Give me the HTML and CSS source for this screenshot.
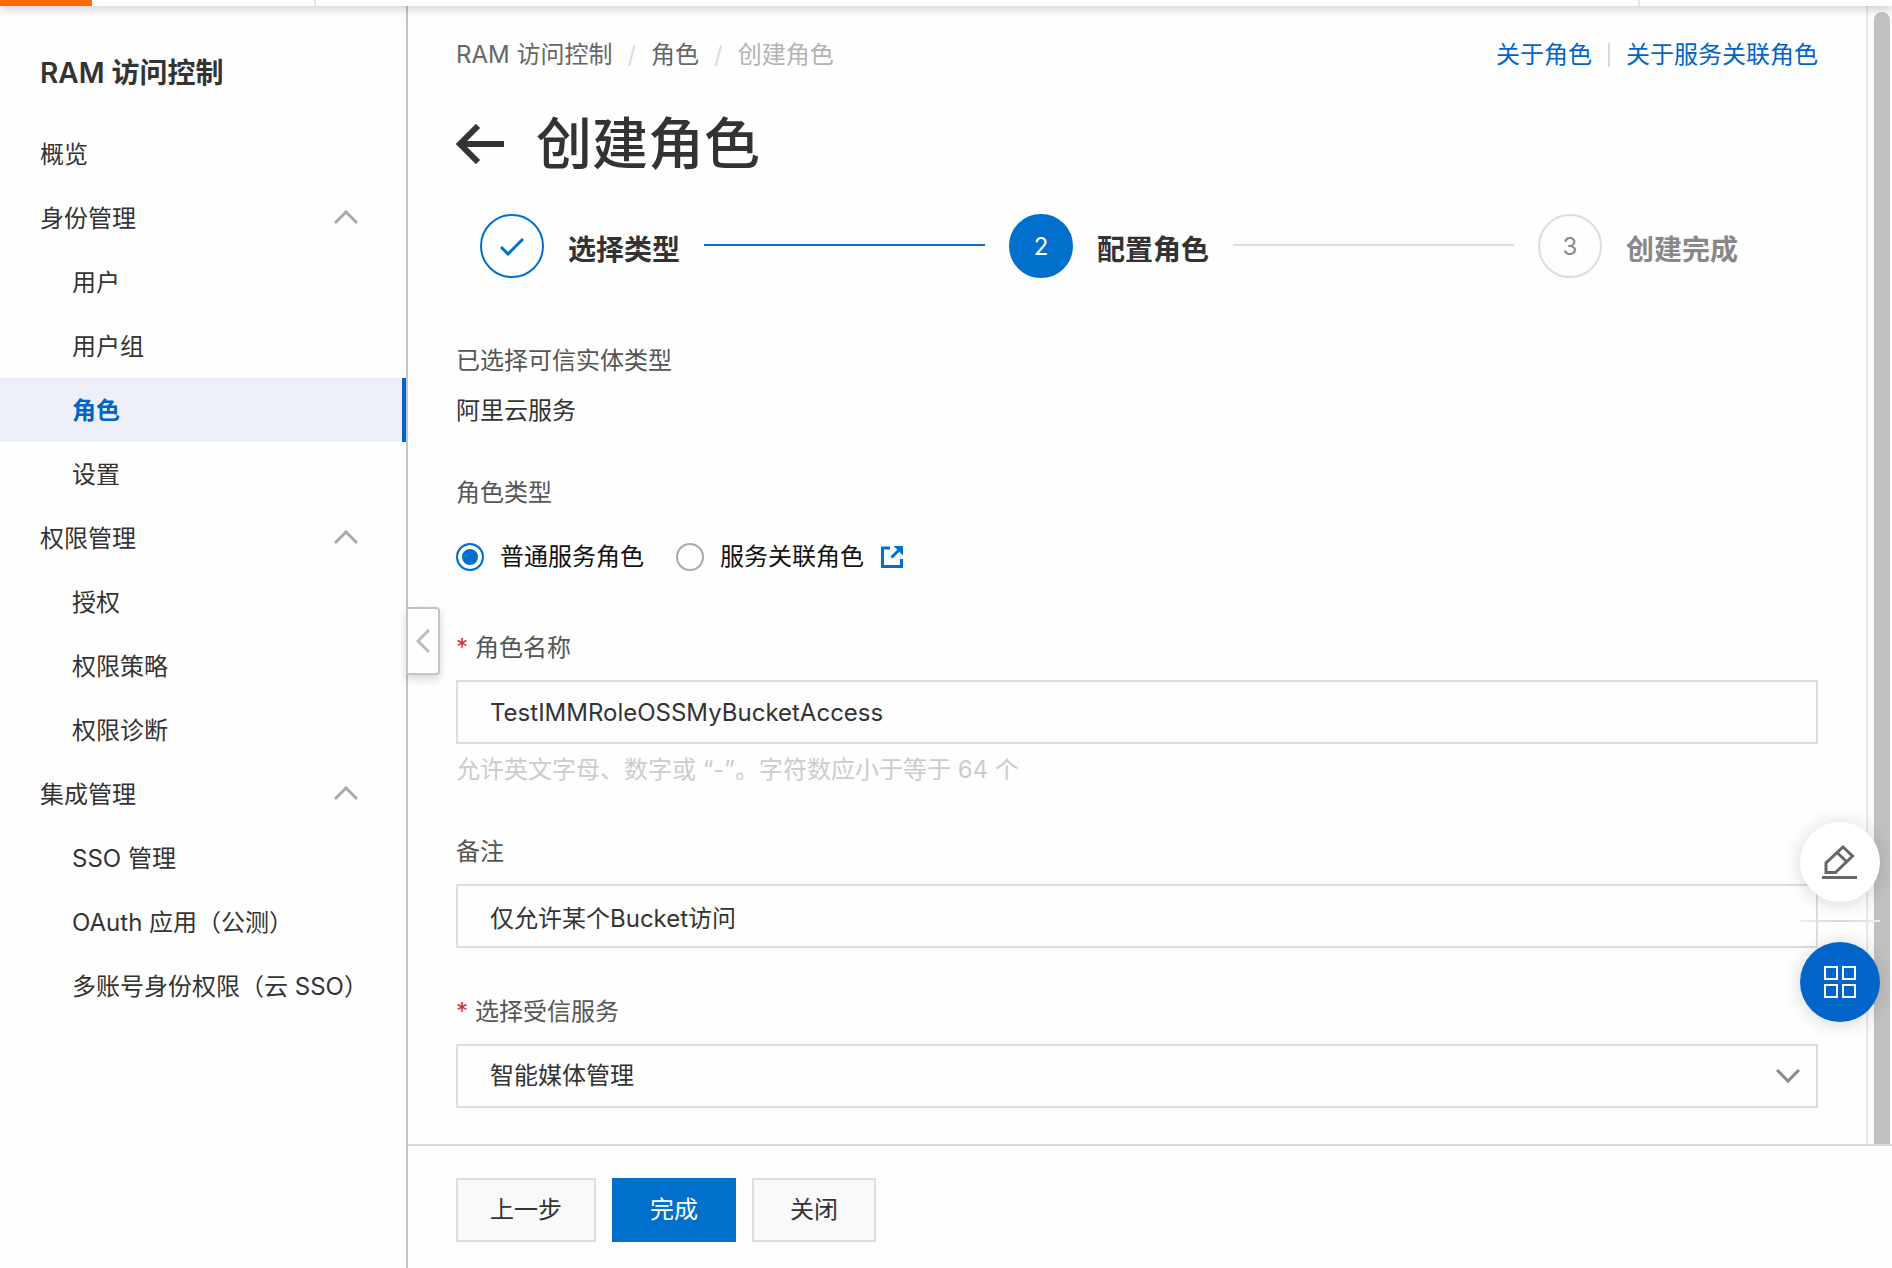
FILE: index.html
```html
<!DOCTYPE html>
<html lang="zh-CN">
<head>
<meta charset="utf-8">
<meta name="viewport" content="width=device-width, initial-scale=1">
<title>创建角色 - RAM 访问控制</title>
<link rel="stylesheet" href="styles.css">
</head>
<body>
<div class="app">
  <header class="topbar">
    <div class="topbar-menu"></div>
    <div class="topbar-logo"></div>
    <div class="topbar-search"></div>
  </header>
  <div class="shell">
    <aside class="sidebar">
      <h2 class="sidebar-title">RAM 访问控制</h2>
      <nav class="nav">
        <a class="nav-item" href="#">概览</a>
        <button class="nav-item nav-group" type="button">身份管理
          <svg class="chevron" viewBox="0 0 24 14" aria-hidden="true"><path d="M1 13 12 2l11 11"/></svg>
        </button>
        <a class="nav-item nav-sub" href="#">用户</a>
        <a class="nav-item nav-sub" href="#">用户组</a>
        <a class="nav-item nav-sub is-active" href="#">角色</a>
        <a class="nav-item nav-sub" href="#">设置</a>
        <button class="nav-item nav-group" type="button">权限管理
          <svg class="chevron" viewBox="0 0 24 14" aria-hidden="true"><path d="M1 13 12 2l11 11"/></svg>
        </button>
        <a class="nav-item nav-sub" href="#">授权</a>
        <a class="nav-item nav-sub" href="#">权限策略</a>
        <a class="nav-item nav-sub" href="#">权限诊断</a>
        <button class="nav-item nav-group" type="button">集成管理
          <svg class="chevron" viewBox="0 0 24 14" aria-hidden="true"><path d="M1 13 12 2l11 11"/></svg>
        </button>
        <a class="nav-item nav-sub" href="#">SSO 管理</a>
        <a class="nav-item nav-sub" href="#">OAuth 应用（公测）</a>
        <a class="nav-item nav-sub" href="#">多账号身份权限（云 SSO）</a>
      </nav>
      <button class="collapse" type="button" aria-label="收起">
        <svg class="collapse-icon" viewBox="0 0 14 24" aria-hidden="true"><path d="M13 1 2 12l11 11"/></svg>
      </button>
    </aside>

    <div class="main">
      <div class="scroll">
        <main class="content">
          <div class="crumb-row">
            <nav class="crumbs">
              <a href="#">RAM 访问控制</a>
              <span class="slash">/</span>
              <a href="#">角色</a>
              <span class="slash">/</span>
              <span class="crumb-current">创建角色</span>
            </nav>
            <div class="help-links">
              <a href="#">关于角色</a>
              <span class="divider"></span>
              <a href="#">关于服务关联角色</a>
            </div>
          </div>

          <div class="title-row">
            <button class="back" type="button" aria-label="返回">
              <svg class="back-icon" viewBox="0 0 48 40" aria-hidden="true"><path d="M48 20H5M22 2 4 20l18 18"/></svg>
            </button>
            <h1 class="title">创建角色</h1>
          </div>

          <ol class="steps">
            <li class="step is-done">
              <span class="step-mark"><svg class="check" viewBox="0 0 24 18" aria-hidden="true"><path d="M1 9l7 7L23 1"/></svg></span>
              <span class="step-label">选择类型</span>
              <span class="step-line"></span>
            </li>
            <li class="step is-current">
              <span class="step-mark">2</span>
              <span class="step-label">配置角色</span>
              <span class="step-line"></span>
            </li>
            <li class="step">
              <span class="step-mark">3</span>
              <span class="step-label">创建完成</span>
            </li>
          </ol>

          <form class="form">
            <div class="field">
              <span class="label">已选择可信实体类型</span>
              <span class="value">阿里云服务</span>
            </div>
            <div class="field" role="radiogroup" aria-labelledby="type-label">
              <span class="label" id="type-label">角色类型</span>
              <div class="choices">
                <label class="choice"><input class="radio" type="radio" name="type" checked>普通服务角色</label>
                <label class="choice"><input class="radio" type="radio" name="type">服务关联角色</label>
                <a class="external" href="#" aria-label="服务关联角色说明">
                  <svg class="external-icon" viewBox="0 0 22 22" aria-hidden="true"><path class="frame" d="M9 2H1.500v18.500h19V13"/><path class="shaft" d="m10.500 11.500 7-7"/><path class="head" d="M12.500 0H22v9.500z"/></svg>
                </a>
              </div>
            </div>
            <div class="field">
              <label class="label required" for="role-name">角色名称</label>
              <input class="control" id="role-name" type="text" value="TestIMMRoleOSSMyBucketAccess">
              <span class="hint">允许英文字母、数字或 “-”。字符数应小于等于 64 个</span>
            </div>
            <div class="field">
              <label class="label" for="remark">备注</label>
              <input class="control" id="remark" type="text" value="仅允许某个Bucket访问">
            </div>
            <div class="field">
              <label class="label required" for="service">选择受信服务</label>
              <div class="select-wrap">
                <select class="control" id="service"><option>智能媒体管理</option></select>
                <svg class="select-icon" viewBox="0 0 24 14" aria-hidden="true"><path d="M1 1l11 11L23 1"/></svg>
              </div>
            </div>
          </form>
        </main>
        <div class="track"><div class="thumb"></div></div>
      </div>
      <footer class="footer">
        <button class="btn" type="button">上一步</button>
        <button class="btn btn-primary" type="button">完成</button>
        <button class="btn" type="button">关闭</button>
      </footer>
    </div>
  </div>

  <div class="floaters">
    <button class="floater" type="button" aria-label="反馈">
      <svg class="pencil" viewBox="0 0 36 36" aria-hidden="true"><path d="M4 28.500V19L21 3l9.500 9-17 16.500zM15 8.500l9 8.500"/><path d="M0 33.500h35"/></svg>
    </button>
    <span class="floater-line"></span>
    <button class="floater floater-blue" type="button" aria-label="应用">
      <svg class="grid-icon" viewBox="0 0 32 32" aria-hidden="true"><path d="M1 1h12v12H1zM19 1h12v12H19zM1 19h12v12H1zM19 19h12v12H19z"/></svg>
    </button>
  </div>
</div>
</body>
</html>
```
FILE: styles.css
```css
* {
  box-sizing: border-box;
}

body {
  margin: 0;
  color: #333;
  background: #fefefe;
  font: 24px/36px Inter, "Noto Sans CJK SC", sans-serif;
}

button,
input,
select {
  font: inherit;
  color: inherit;
}

a {
  color: inherit;
  text-decoration: none;
}

svg {
  display: block;
  fill: none;
}

.app {
  position: relative;
  display: flex;
  flex-direction: column;
  height: 100vh;
  overflow: hidden;
}

/* Top bar */
.topbar {
  position: relative;
  z-index: 2;
  display: flex;
  flex: none;
  height: 6px;
  background: #fefefe;
  box-shadow: 0 2px 10px rgba(0, 0, 0, 0.26);
}

.topbar-menu {
  width: 92px;
  background: #ff6a00;
}

.topbar-logo {
  width: 224px;
  border-right: 2px solid #e6e6e6;
}

.topbar-search {
  flex: 1;
  margin-right: 252px;
  border-right: 2px solid #e6e6e6;
}

.shell {
  display: flex;
  flex: 1;
  min-height: 0;
}

/* Sidebar */
.sidebar {
  position: relative;
  flex: none;
  width: 408px;
  border-right: 2px solid #c0c4cc;
}

.sidebar-title {
  margin: 0;
  padding: 49px 40px 31px;
  font-size: 28px;
  font-weight: 600;
}

.nav {
  display: flex;
  flex-direction: column;
}

.nav-item {
  display: flex;
  align-items: center;
  justify-content: space-between;
  height: 64px;
  padding: 2px 48px 0 40px;
  border: 0;
  background: none;
  white-space: nowrap;
}

.nav-sub {
  padding: 2px 0 0 72px;
}

.is-active {
  color: #0064c8;
  background: #edf1f7;
  border-right: 4px solid #0064c8;
  font-weight: 600;
}

.chevron,
.select-icon {
  width: 24px;
  height: 14px;
  stroke: #aaa;
  stroke-width: 3;
}

.chevron {
  margin-bottom: 4px;
}

.collapse {
  position: absolute;
  top: 601px;
  left: 406px;
  z-index: 1;
  width: 34px;
  height: 68px;
  padding: 0 0 0 8px;
  border: 2px solid #c0c4cc;
  border-radius: 0 4px 4px 0;
  background: #fefefe;
  box-shadow: 0 4px 8px rgba(0, 0, 0, 0.16);
}

.collapse-icon {
  width: 14px;
  height: 24px;
  stroke: #bbb;
  stroke-width: 3;
}

/* Main column */
.main {
  display: flex;
  flex: 1;
  flex-direction: column;
  min-width: 0;
}

.scroll {
  display: flex;
  flex: 1;
  min-height: 0;
}

.content {
  flex: 1;
  min-width: 0;
  padding: 31px 48px 0;
}

.track {
  flex: none;
  width: 26px;
  padding: 6px 2px 0 6px;
  border-left: 2px solid #e8e8e8;
  background: #fafafa;
}

.thumb {
  height: 100%;
  border-radius: 8px 8px 0 0;
  background: #c1c1c1;
}

.crumb-row,
.crumbs,
.help-links {
  display: flex;
  align-items: center;
}

.crumb-row {
  justify-content: space-between;
}

.crumbs {
  gap: 15px;
  color: #666;
}

.slash {
  color: #ddd;
}

.crumb-current {
  color: #b3b3b3;
}

.help-links {
  gap: 16px;
  color: #0064c8;
}

.divider {
  width: 2px;
  height: 24px;
  background: #d9d9d9;
}

.title-row {
  display: flex;
  align-items: center;
  gap: 32px;
  margin-top: 33px;
}

.back {
  padding: 0;
  border: 0;
  background: none;
}

.back-icon {
  width: 48px;
  height: 40px;
  stroke: #333;
  stroke-width: 6;
}

.title {
  margin: 0;
  font-size: 56px;
  font-weight: 500;
  line-height: 76px;
}

/* Steps */
.steps {
  display: flex;
  margin: 32px 0 0;
  padding: 0 80px 0 24px;
  list-style: none;
}

.step {
  display: flex;
  align-items: center;
  gap: 24px;
  color: #888;
}

.step:not(:last-child) {
  flex: 1;
  padding-right: 24px;
  color: #333;
}

.step-mark {
  display: flex;
  align-items: center;
  justify-content: center;
  width: 64px;
  height: 64px;
  padding-top: 2px;
  border: 2px solid #ddd;
  border-radius: 50%;
}

.is-done .step-mark {
  border-color: #0070cc;
}

.step.is-current .step-mark {
  border-color: #0070cc;
  background: #0070cc;
  color: #fff;
}

.check {
  width: 24px;
  height: 18px;
  stroke: #0070cc;
  stroke-width: 3;
}

.step-label {
  padding-top: 8px;
  font-size: 28px;
  font-weight: 600;
}

.step-line {
  flex: 1;
  height: 2px;
  margin-bottom: 2px;
  background: #ddd;
}

.is-done .step-line {
  background: #0070cc;
}

/* Form */
.form {
  display: flex;
  flex-direction: column;
  gap: 46px;
  margin-top: 65px;
}

.field {
  display: flex;
  flex-direction: column;
}

.label {
  margin-bottom: 14px;
  color: #555;
}

.required::before {
  content: "*";
  margin-right: 7px;
  color: #d93026;
}

.choices {
  display: flex;
  align-items: center;
  padding: 14px 0 9px;
  color: #111;
}

.choice {
  display: flex;
  align-items: center;
  gap: 16px;
  margin-right: 32px;
}

.choice:nth-child(2) {
  margin-right: 17px;
}

.radio {
  appearance: none;
  width: 28px;
  height: 28px;
  margin: 0;
  border: 2px solid #aaa;
  border-radius: 50%;
}

.radio:checked {
  border-color: #0070cc;
  background: #0070cc;
  box-shadow: inset 0 0 0 4px #fefefe;
}

.external-icon {
  width: 22px;
  height: 22px;
}

.frame,
.shaft {
  stroke: #0070cc;
  stroke-width: 3;
}

.head {
  fill: #0070cc;
}

.control {
  width: 100%;
  height: 64px;
  padding: 0 32px;
  border: 2px solid #ddd;
  border-radius: 0;
  background: transparent;
  appearance: none;
}

.hint {
  margin-top: 8px;
  color: #ccc;
}

.select-wrap {
  position: relative;
}

.select-icon {
  position: absolute;
  top: 25px;
  right: 18px;
  stroke: #888;
  pointer-events: none;
}

/* Footer */
.footer {
  display: flex;
  flex: none;
  gap: 16px;
  padding: 32px 48px 26px;
  border-top: 2px solid #d9d9d9;
}

.btn {
  min-width: 124px;
  height: 64px;
  padding: 0 32px;
  border: 2px solid #ddd;
  background: #f9f9f9;
}

.btn-primary {
  border-color: #0070cc;
  background: #0070cc;
  color: #fff;
}

/* Floating tools */
.floaters {
  position: absolute;
  right: 12px;
  bottom: 246px;
  z-index: 3;
  display: flex;
  flex-direction: column;
  gap: 18px;
}

.floater {
  display: flex;
  align-items: center;
  justify-content: center;
  width: 80px;
  height: 80px;
  padding: 0;
  border: 0;
  border-radius: 50%;
  background: #fff;
  box-shadow: 0 2px 20px rgba(0, 0, 0, 0.16);
}

.floater-line {
  height: 2px;
  margin-bottom: 2px;
  background: linear-gradient(90deg, #eee, #d3d8de, #eee);
}

.floater-blue {
  background: #0064c8;
}

.pencil {
  width: 36px;
  height: 36px;
  stroke: #666;
  stroke-width: 3;
}

.grid-icon {
  width: 32px;
  height: 32px;
  stroke: #fff;
  stroke-width: 2;
}
```
